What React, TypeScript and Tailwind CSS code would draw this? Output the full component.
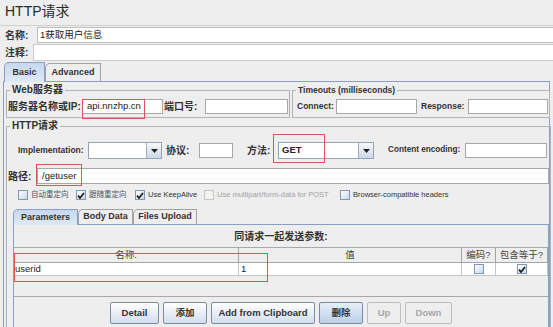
import React from "react";

const font = "font-['Liberation_Sans','Noto_Sans_CJK_SC',sans-serif]";

function Input({ className = "", children }: { className?: string; children?: React.ReactNode }) {
  return (
    <div
      className={`flex h-[15px] shrink-0 items-center overflow-hidden border border-[#a7a7a7] bg-white px-[4px] text-[9.5px] text-[#222] ${className}`}
    >
      {children}
    </div>
  );
}

function Label({ className = "", children }: { className?: string; children: React.ReactNode }) {
  return <span className={`shrink-0 whitespace-nowrap font-bold text-[#333] ${className}`}>{children}</span>;
}

function Combo({ className = "", value }: { className?: string; value?: string }) {
  return (
    <div className={`flex h-[17px] shrink-0 border border-[#95a3b8] bg-white ${className}`}>
      <div className="flex flex-1 items-center px-[3px] text-[9.5px] font-bold text-[#222]">{value}</div>
      <div className="flex w-[15px] items-center justify-center border-l border-[#a2aec0] bg-linear-to-b from-[#f7f9fc] to-[#cbd8e8]">
        <svg width="7" height="4" viewBox="0 0 7 4">
          <path d="M0 0H7L3.5 4Z" fill="#222" />
        </svg>
      </div>
    </div>
  );
}

function Check({ on, off }: { on?: boolean; off?: boolean }) {
  return (
    <span
      className={`flex h-[10px] w-[10px] shrink-0 items-center justify-center border ${
        off ? "border-[#c6c6c6] bg-[#f2f2f2]" : "border-[#8197b6] bg-linear-to-br from-[#ffffff] to-[#c9d7e9]"
      }`}
    >
      {on && (
        <svg width="8" height="7" viewBox="0 0 8 7">
          <path d="M1 3.6L3 6L7 1" stroke="#1e1e1e" strokeWidth="1.7" fill="none" />
        </svg>
      )}
    </span>
  );
}

function Tab({ className = "", active, children }: { className?: string; active?: boolean; children: React.ReactNode }) {
  return (
    <div
      className={`flex shrink-0 items-center justify-center rounded-tl-[5px] border border-b-0 text-[9px] font-bold text-[#333] ${
        active
          ? "relative z-10 -mb-px border-[#8aa0c2] bg-linear-to-b from-[#c6d8ef] to-[#dfe9f6]"
          : "border-[#a2a2a2] bg-[#eeeeee]"
      } ${className}`}
    >
      {children}
    </div>
  );
}

function Btn({ className = "", disabled, blue, children }: { className?: string; disabled?: boolean; blue?: boolean; children: React.ReactNode }) {
  return (
    <div
      className={`flex h-[22px] shrink-0 items-center justify-center rounded-[2px] border text-[9.5px] font-bold ${
        disabled
          ? "border-[#bdbdbd] bg-[#eeeeee] text-[#a6a6a6]"
          : blue
          ? "border-[#7a8ba3] bg-linear-to-b from-[#e6eef8] to-[#bdd0e7] text-[#333]"
          : "border-[#7a8ba3] bg-linear-to-b from-[#ffffff] to-[#d2deec] text-[#333]"
      } ${className}`}
    >
      {children}
    </div>
  );
}

export default function App() {
  return (
    <div className={`relative h-[327px] w-[553px] overflow-hidden bg-[#eeeeee] text-[#222] ${font}`}>
      {/* Title */}
      <div className="h-[26px] border-b border-[#cfcfcf] pl-[5px] pt-[3px] text-[14px] leading-[17px] text-[#2a2a2a]">
        HTTP请求
      </div>

      {/* Name / comment */}
      <div className="mt-[1px] flex h-[16px] items-center">
        <Label className="w-[37px] pl-[5px] text-[10px]">名称:</Label>
        <div className="flex h-[16px] flex-1 items-center border-y border-l border-[#bdbdbd] bg-white px-[2px] text-[9.5px]">
          1获取用户信息
        </div>
      </div>
      <div className="mt-[1px] flex h-[17px] items-center">
        <Label className="w-[33px] pl-[5px] text-[10px]">注释:</Label>
        <div className="h-[17px] flex-1 border-y border-l border-[#c9c9c9] bg-white" />
      </div>

      {/* Basic / Advanced tabs */}
      <div className="mt-[1px] flex h-[19px] items-end pl-[4px]">
        <Tab active className="h-[20px] w-[41px]">Basic</Tab>
        <Tab className="h-[18px] w-[56px]">Advanced</Tab>
      </div>

      <div className="ml-[3px] h-[250px] w-[547px] border border-b-0 border-[#8aa0c2]">
        {/* Web server + timeouts */}
        <div className="ml-[2px] mt-[1px] flex gap-[2px]">
          <fieldset className="w-[285px] border border-[#b3b3b3] px-[1px] pb-[3px]">
            <legend className="ml-[2px] px-[2px] text-[10px] font-bold leading-[14px] text-[#333]">Web服务器</legend>
            <div className="mt-[2px] flex h-[15px] items-center">
              <Label className="w-[74px] text-[10px]">服务器名称或IP:</Label>
              <Input className="w-[81px]">api.nnzhp.cn</Input>
              <Label className="w-[42px] pl-[1px] text-[10px]">端口号:</Label>
              <Input className="w-[83px]" />
            </div>
          </fieldset>
          <fieldset className="flex-1 border border-[#b3b3b3] px-[1px] pb-[3px]">
            <legend className="ml-[2px] px-[2px] text-[8.5px] font-bold leading-[14px] text-[#333]">
              Timeouts (milliseconds)
            </legend>
            <div className="mt-[2px] flex h-[15px] items-center pl-[3px]">
              <Label className="w-[39px] text-[8.5px]">Connect:</Label>
              <Input className="w-[81px]" />
              <Label className="ml-[4px] w-[47px] text-[8.5px]">Response:</Label>
              <Input className="w-[80px]" />
            </div>
          </fieldset>
        </div>

        {/* HTTP request */}
        <fieldset className="ml-[2px] mt-[1px] h-[230px] w-[543px] border border-[#b3b3b3] px-[1px]">
          <legend className="ml-[2px] px-[2px] text-[10px] font-bold leading-[14px] text-[#333]">HTTP请求</legend>

          <div className="mt-[9px] flex h-[17px] items-center pl-[10px]">
            <Label className="w-[70px] text-[8.5px]">Implementation:</Label>
            <Combo className="w-[74px]" />
            <Label className="ml-[4px] w-[33px] text-[10px]">协议:</Label>
            <Input className="w-[34px]" />
            <Label className="ml-[14px] w-[31px] text-[10px]">方法:</Label>
            <Combo className="w-[96px]" value="GET" />
            <Label className="ml-[14px] w-[77px] text-[8.2px]">Content encoding:</Label>
            <Input className="w-[82px]" />
          </div>

          <div className="mt-[9px] flex h-[16px] items-center">
            <Label className="w-[29px] text-[10px]">路径:</Label>
            <Input className="h-[16px] flex-1">/getuser</Input>
          </div>

          <div className="mt-[6px] flex h-[10px] items-center pl-[10px] text-[7.5px]">
            <div className="flex w-[58px] items-center gap-[3px]">
              <Check />
              <span className="text-[7.5px] text-[#4d5566]">自动重定向</span>
            </div>
            <div className="flex w-[59px] items-center gap-[3px]">
              <Check on />
              <span className="text-[7.5px] text-[#4d5566]">跟随重定向</span>
            </div>
            <div className="flex w-[69px] items-center gap-[3px]">
              <Check on />
              <span className="text-[#333]">Use KeepAlive</span>
            </div>
            <div className="flex w-[136px] items-center gap-[3px]">
              <Check off />
              <span className="text-[#a3a3a3]">Use multipart/form-data for POST</span>
            </div>
            <div className="flex items-center gap-[3px]">
              <Check />
              <span className="text-[#333]">Browser-compatible headers</span>
            </div>
          </div>

          {/* Parameters tabs */}
          <div className="ml-[5px] mt-[9px] flex h-[15px] items-end">
            <Tab active className="h-[16px] w-[65px]">Parameters</Tab>
            <Tab className="h-[15px] w-[55px]">Body Data</Tab>
            <Tab className="h-[15px] w-[64px]">Files Upload</Tab>
          </div>
          <div className="ml-[5px] h-[120px] border border-b-0 border-[#8aa0c2]">
            <div className="flex h-[22px] items-center justify-center text-[10px] font-bold text-[#333]">
              同请求一起发送参数:
            </div>
            <div className="h-[50px] border-y border-[#a9a9a9]">
              <div className="flex h-[15px] border-b border-[#a4a4a4] text-[9.5px] text-[#444]">
                <div className="flex w-[225px] items-center justify-center border-r border-[#a4a4a4]">名称:</div>
                <div className="flex w-[223px] items-center justify-center border-r border-[#a4a4a4]">值</div>
                <div className="flex w-[34px] items-center justify-center border-r border-[#a4a4a4]">编码?</div>
                <div className="flex w-[52px] items-center justify-center border-r border-[#a4a4a4]">包含等于?</div>
              </div>
              <div className="flex h-[13px] border-b border-[#c4c4c4] bg-white text-[9.5px] text-[#222]">
                <div className="flex w-[225px] items-center border-r border-[#c4c4c4] pl-[1px]">userid</div>
                <div className="flex w-[223px] items-center border-r border-[#c4c4c4] pl-[2px]">1</div>
                <div className="flex w-[34px] items-center justify-center border-r border-[#c4c4c4]">
                  <Check />
                </div>
                <div className="flex w-[52px] items-center justify-center border-r border-[#c4c4c4]">
                  <Check on />
                </div>
              </div>
            </div>
            <div className="mt-[5px] flex justify-center gap-[4px]">
              <Btn className="w-[49px]">Detail</Btn>
              <Btn className="w-[44px]">添加</Btn>
              <Btn className="w-[104px]">Add from Clipboard</Btn>
              <Btn blue className="w-[44px]">删除</Btn>
              <Btn disabled className="w-[34px]">Up</Btn>
              <Btn disabled className="w-[47px]">Down</Btn>
            </div>
          </div>
        </fieldset>
      </div>

      {/* red annotation boxes */}
      <div className="pointer-events-none absolute left-[82px] top-[99px] h-[20px] w-[63px] border border-[#e0525a]" />
      <div className="pointer-events-none absolute left-[273px] top-[134px] h-[29px] w-[52px] border border-[#e0525a]" />
      <div className="pointer-events-none absolute left-[36px] top-[164px] h-[22px] w-[46px] border border-[#e0525a]" />
      <div className="pointer-events-none absolute left-[14px] top-[253px] h-[29px] w-[254px] border border-[#e0525a]" />
    </div>
  );
}
